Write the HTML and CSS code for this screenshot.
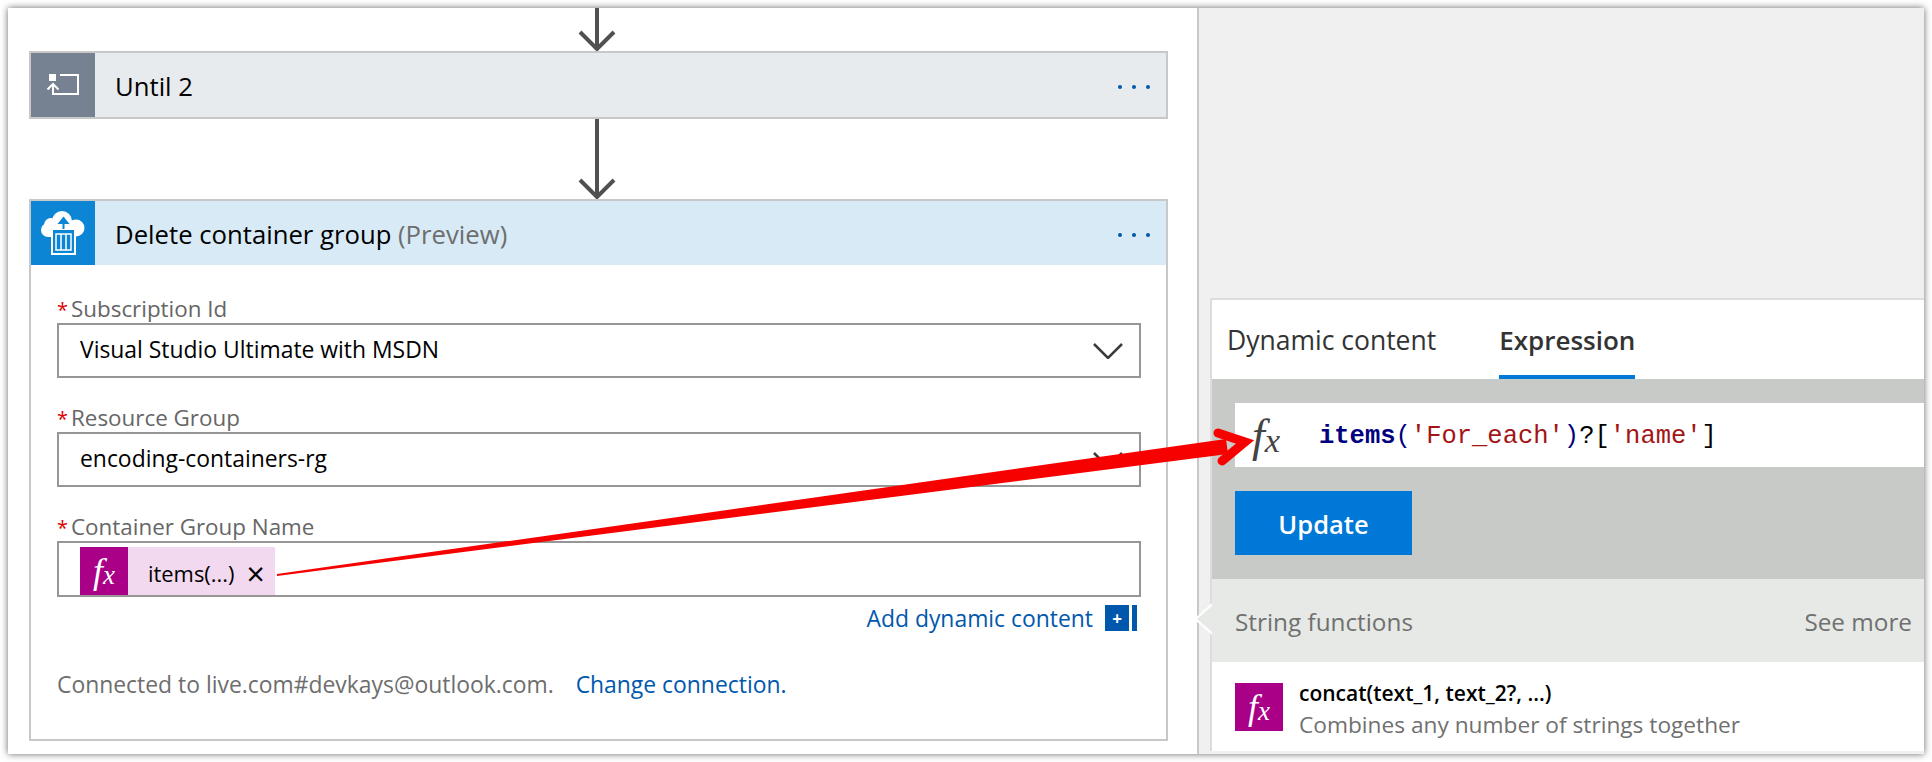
FILE: index.html
```html
<!DOCTYPE html>
<html>
<head>
  <title>Logic App Designer</title>
  <link rel="stylesheet" href="styles.css">
</head>
<body>

<div class="frame">
  <div class="designer">
    <svg class="connector first" width="38" height="43" viewBox="0 0 38 43">
      <path d="M19 0V41M2 24L19 41L36 24" fill="none" stroke="#505050" stroke-width="4"/>
    </svg>

    <div class="card">
      <div class="card-head grey">
        <div class="tile tile-grey">
          <svg width="64" height="64" viewBox="0 0 64 64">
            <rect x="18" y="21" width="7" height="7" fill="#fff"/>
            <path d="M29 22H47V41H22V31M16.500 36.500L22 31L27.500 36.500" fill="none" stroke="#fff" stroke-width="2"/>
          </svg>
        </div>
        <div class="card-title">Until 2</div>
        <div class="dots"><span></span><span></span><span></span></div>
      </div>
    </div>

    <svg class="connector" width="38" height="80" viewBox="0 0 38 80">
      <path d="M19 0V78M2 61L19 78L36 61" fill="none" stroke="#505050" stroke-width="4"/>
    </svg>

    <div class="card">
      <div class="card-head blue">
        <div class="tile tile-blue">
          <svg width="64" height="64" viewBox="0 0 64 64">
            <circle cx="31" cy="20" r="10" fill="#fff"/>
            <circle cx="20" cy="24" r="7" fill="#fff"/>
            <circle cx="45" cy="27" r="8.500" fill="#fff"/>
            <circle cx="17" cy="29" r="7" fill="#fff"/>
            <rect x="17" y="24" width="28" height="12" fill="#fff"/>
            <rect x="21" y="28" width="23" height="25" fill="#0b85d4" stroke="#fff" stroke-width="2"/>
            <rect x="25" y="33" width="15" height="16" fill="none" stroke="#fff" stroke-width="1.500"/>
            <path d="M30 33V49M35 33V49" stroke="#fff" stroke-width="1.500"/>
            <path d="M32.500 28V19M28.500 22L32.500 17L36.500 22Z" fill="#0b85d4" stroke="#0b85d4" stroke-width="2"/>
          </svg>
        </div>
        <div class="card-title">Delete container group <span class="preview">(Preview)</span></div>
        <div class="dots"><span></span><span></span><span></span></div>
      </div>

      <div class="card-body">
        <div class="label"><span class="star">*</span>Subscription Id</div>
        <div class="field">
          <span>Visual Studio Ultimate with MSDN</span>
          <svg class="chevron" width="30" height="16" viewBox="0 0 30 16"><path d="M1 1L15 15L29 1" fill="none" stroke="#3c3c3c" stroke-width="2.500"/></svg>
        </div>

        <div class="label"><span class="star">*</span>Resource Group</div>
        <div class="field">
          <span>encoding-containers-rg</span>
          <svg class="chevron" width="30" height="16" viewBox="0 0 30 16"><path d="M1 1L15 15L29 1" fill="none" stroke="#3c3c3c" stroke-width="2.500"/></svg>
        </div>

        <div class="label"><span class="star">*</span>Container Group Name</div>
        <div class="field field-token">
          <div class="token">
            <div class="fx fx-token">f<i>x</i></div>
            <span class="token-name">items(...)</span>
            <span class="token-x">×</span>
          </div>
        </div>

        <div class="add-row">
          <span class="link">Add dynamic content</span>
          <span class="add-icon"><b>+</b></span>
        </div>

        <div class="conn-row">
          Connected to live.com#devkays@outlook.com.
          <span class="link change">Change connection.</span>
        </div>
      </div>
    </div>
  </div>

  <div class="side">
    <div class="popup">
      <div class="notch"></div>
      <div class="tabs">
        <div class="tab">Dynamic content</div>
        <div class="tab active">Expression</div>
      </div>
      <div class="editor">
        <div class="expr">
          <div class="fx fx-big">f<i>x</i></div>
          <code><b>items</b><em>(</em><s>'For_each'</s><em>)</em>?[<s>'name'</s>]</code>
        </div>
        <button class="update">Update</button>
      </div>
      <div class="section-head">
        <span>String functions</span>
        <span>See more</span>
      </div>
      <div class="func">
        <div class="fx fx-token">f<i>x</i></div>
        <div class="func-text">
          <div class="func-name">concat(text_1, text_2?, ...)</div>
          <div class="func-desc">Combines any number of strings together</div>
        </div>
      </div>
    </div>
  </div>

  <svg class="annotation" width="1916" height="746" viewBox="8 8 1916 746">
    <path d="M277 574L1226 439L1228 454L277 576Z" fill="#f70000"/>
    <path d="M1218 433L1245 442L1222 461" fill="none" stroke="#f70000" stroke-width="9" stroke-linecap="round" stroke-linejoin="miter"/>
  </svg>
</div>

</body>
</html>
```

FILE: styles.css
```css
body {
  margin: 0;
  padding: 8px;
  height: 746px;
  overflow: hidden;
  background-color: #fff;
  font-family: "Open Sans", "Noto Sans", sans-serif;
}

.frame {
  position: relative;
  display: flex;
  width: 1916px;
  height: 746px;
  overflow: hidden;
  background-color: #fff;
  box-shadow: 0 0 7px rgba(0, 0, 0, 0.6);
}

.designer {
  width: 1189px;
  flex-shrink: 0;
  padding-left: 21px;
  box-sizing: border-box;
}

.connector {
  display: block;
  margin-left: 549px;
}

.card {
  width: 1139px;
  box-sizing: border-box;
  border: 2px solid #c8c8c8;
}

.card-head {
  display: flex;
  align-items: center;
  height: 64px;
}

.grey { background-color: #e8ebee; }
.blue { background-color: #d7eaf6; }

.tile {
  width: 64px;
  height: 64px;
  flex-shrink: 0;
}

.tile svg { display: block; }
.tile-grey { background-color: #768191; }
.tile-blue { background-color: #0b85d4; }

.card-title {
  flex: 1;
  padding: 2px 0 0 20px;
  font-size: 25.700px;
  color: #000;
}

.preview { color: #6e6e6e; }

.dots {
  display: flex;
  gap: 10px;
  padding: 3px 16px 0 0;
}

.dots span {
  width: 4px;
  height: 4px;
  border-radius: 50%;
  background-color: #0058ad;
}

.card-body {
  padding: 30px 25px 40px 26px;
}

.label {
  height: 28px;
  line-height: 28px;
  font-size: 22.400px;
  color: #666;
}

.star {
  color: #e00000;
  font-size: 20px;
  margin-right: 3px;
}

.field {
  display: flex;
  align-items: center;
  justify-content: space-between;
  height: 55px;
  margin-bottom: 26px;
  padding: 0 16px 3px 21px;
  box-sizing: border-box;
  border: 2px solid #969696;
  font-size: 22.900px;
  color: #000;
}

.chevron { margin-top: 3px; }

.field-token {
  height: 56px;
  margin-bottom: 0;
  padding-top: 4px;
  padding-bottom: 0;
  align-items: flex-start;
  justify-content: flex-start;
}

.token {
  display: flex;
  align-items: center;
  width: 195px;
  height: 48px;
  background-color: #f2d9ef;
}

.fx {
  display: flex;
  align-items: center;
  justify-content: center;
  flex-shrink: 0;
  font-family: "Liberation Serif", serif;
  font-style: italic;
}

.fx i { font-size: 0.750em; margin-top: 0.300em; }

.fx-token {
  width: 48px;
  height: 48px;
  background-color: #aa0088;
  color: #fff;
  font-size: 36px;
}

.token-name {
  margin: 5px 0 0 20px;
  font-size: 21.900px;
}

.token-x {
  margin: 5px 0 0 12px;
  font-size: 32px;
  line-height: 1;
}

.add-row {
  display: flex;
  align-items: center;
  justify-content: flex-end;
  height: 26px;
  margin-top: 8px;
  padding-right: 4px;
}

.link {
  color: #0058ad;
  font-size: 22.900px;
}

.add-icon {
  display: flex;
  align-items: center;
  justify-content: center;
  width: 24px;
  height: 26px;
  margin-left: 12px;
  box-shadow: 3px 0 0 #fff, 8px 0 0 #0058ad;
  margin-right: 8px;
  background-color: #0058ad;
  color: #fff;
  font-size: 17px;
}

.conn-row {
  height: 28px;
  margin-top: 40px;
  line-height: 28px;
  font-size: 22.900px;
  color: #6e6e6e;
  white-space: nowrap;
}

.change { margin-left: 16px; }

.side {
  display: flex;
  flex: 1;
  padding: 290px 0 0 11px;
  border-left: 2px solid #c8c8c8;
  background-color: #f0f0f0;
}

.popup {
  position: relative;
  flex: 1;
  display: flex;
  flex-direction: column;
  margin-bottom: 3px;
  border-top: 2px solid #dcdcdc;
  border-left: 2px solid #dcdcdc;
  background-color: #fff;
}

.notch {
  position: absolute;
  left: -18px;
  top: 303px;
  width: 18px;
  height: 32px;
  background-color: #fff;
  clip-path: polygon(0 50%, 100% 0, 100% 100%);
}

.notch::after {
  content: "";
  position: absolute;
  left: 3px;
  top: 3px;
  width: 15px;
  height: 26px;
  background-color: #e7e9e6;
  clip-path: polygon(0 50%, 100% 0, 100% 100%);
}

.tabs {
  display: flex;
  height: 79px;
  padding-left: 15px;
  gap: 63px;
}

.tab {
  line-height: 80px;
  font-size: 26.500px;
  color: #333;
}

.tab.active {
  font-size: 26px;
  font-weight: 600;
  border-bottom: 4px solid #0078d7;
  box-sizing: border-box;
}

.editor {
  height: 200px;
  padding: 24px 0 0 23px;
  box-sizing: border-box;
  background-color: #c8cac7;
}

.expr {
  display: flex;
  align-items: center;
  height: 64px;
  background-color: #fff;
}

.fx-big {
  width: 84px;
  font-size: 46px;
  color: #444;
  padding-right: 22px;
  box-sizing: border-box;
}

code {
  font-family: "Liberation Mono", monospace;
  font-size: 25.500px;
  color: #000;
  padding-top: 2px;
}

code b { color: #000080; }
code em { color: #000080; font-style: normal; }
code s { color: #a31515; text-decoration: none; }

.update {
  display: block;
  width: 177px;
  height: 64px;
  margin-top: 24px;
  padding: 2px 0 0;
  border: none;
  background-color: #0078d7;
  color: #fff;
  font-family: inherit;
  font-size: 25.500px;
  font-weight: 600;
}

.section-head {
  display: flex;
  align-items: center;
  justify-content: space-between;
  height: 83px;
  padding: 2px 12px 0 23px;
  box-sizing: border-box;
  background-color: #e7e9e6;
  font-size: 24.300px;
  color: #707070;
}

.func {
  display: flex;
  gap: 16px;
  padding: 21px 0 0 23px;
}

.func-name {
  font-size: 21px;
  font-weight: 600;
  color: #000;
  line-height: 28px;
  margin-top: -4px;
}

.func-desc {
  font-size: 22.700px;
  color: #707070;
  line-height: 28px;
  margin-top: 4px;
}

.annotation {
  position: absolute;
  left: 0;
  top: 0;
  pointer-events: none;
}
```
